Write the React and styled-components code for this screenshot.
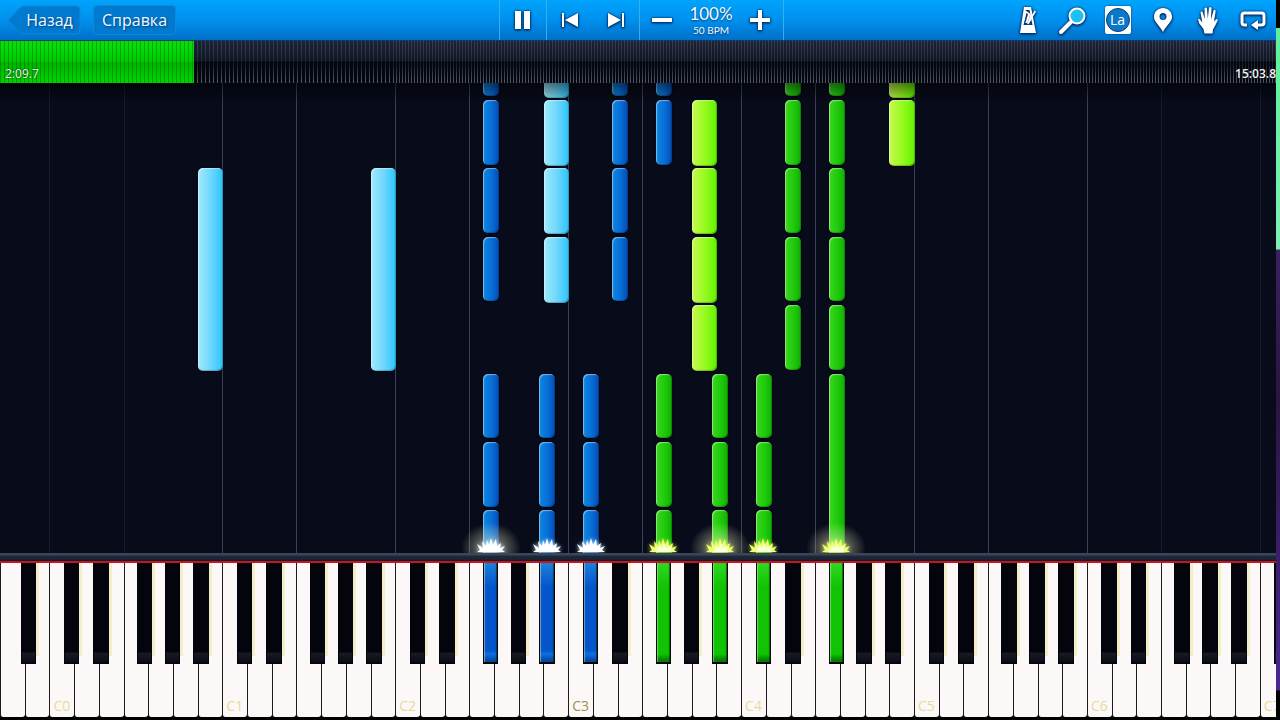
import React from "react";
import styled, { createGlobalStyle, css } from "styled-components";

const GlobalStyle = createGlobalStyle`
  * {
    box-sizing: border-box;
  }
  body {
    margin: 0;
    background: #000;
    font-family: "Open Sans", "Noto Sans", sans-serif;
  }
  button {
    font-family: inherit;
    border: 0;
    padding: 0;
    margin: 0;
    background: none;
    cursor: pointer;
  }
`;

// width of a white key, in % of the keyboard
const KEY = 1.9362;
// height of one beat row, in % of the note field
const ROW = 14.55;
const FIRST_ROW = 3.617;
const WHITE_COUNT = 52;

// where a black key starts, counted in white keys from the C of its octave
const BLACK_AT = { C: 0.587, D: 1.78, F: 3.54, G: 4.67, A: 5.83 };
const NAMES = ["C", "D", "E", "F", "G", "A", "B"];

// the keyboard starts on A, two white keys before C0
const octaveStart = (octave) => 2 + octave * 7;

const pitchLeft = (pitch) => {
  const sharp = pitch[1] === "#";
  const octave = Number(pitch[pitch.length - 1]);
  const inOctave = sharp ? BLACK_AT[pitch[0]] : NAMES.indexOf(pitch[0]);
  return (octaveStart(octave) + inOctave) * KEY;
};

const notes = [
  { pitch: "B0", rows: [1], span: 3, hand: "left" },
  { pitch: "B1", rows: [1], span: 3, hand: "left" },
  { pitch: "F#2", rows: [-1, 0, 1, 2, 4, 5, 6], hand: "left" },
  { pitch: "B2", rows: [-1, 0, 1, 2], hand: "left" },
  { pitch: "A#2", rows: [4, 5, 6], hand: "left" },
  { pitch: "C#3", rows: [4, 5, 6], hand: "left" },
  { pitch: "D#3", rows: [-1, 0, 1, 2], hand: "left" },
  { pitch: "F#3", rows: [-1, 0], hand: "left" },
  { pitch: "F#3", rows: [4, 5, 6], hand: "right" },
  { pitch: "A3", rows: [0, 1, 2, 3], hand: "right" },
  { pitch: "A#3", rows: [4, 5, 6], hand: "right" },
  { pitch: "C#4", rows: [4, 5, 6], hand: "right" },
  { pitch: "D#4", rows: [-1, 0, 1, 2, 3], hand: "right" },
  { pitch: "F#4", rows: [-1, 0, 1, 2, 3], hand: "right" },
  { pitch: "F#4", rows: [4], span: 3, hand: "right" },
  { pitch: "B4", rows: [-1, 0], hand: "right" },
];

const pressed = {
  "F#2": "left",
  "A#2": "left",
  "C#3": "left",
  "F#3": "right",
  "A#3": "right",
  "C#4": "right",
  "F#4": "right",
};

const glowing = ["F#2", "A#3", "F#4"];

const whiteKeys = Array.from({ length: WHITE_COUNT }, (_, i) => {
  const name = NAMES[(i + 5) % 7];
  const octave = Math.floor((i + 5) / 7) - 1;
  return { name, octave };
});

function Spark({ pitch, hand }) {
  const color = hand === "left" ? "#ffffff" : "#f0ff7a";
  return (
    <SparkBox
      $hand={hand}
      $glow={glowing.includes(pitch)}
      style={{ left: `${pitchLeft(pitch) + KEY * 0.315}%` }}
    >
      <svg width="32" height="16" viewBox="0 0 32 16">
        <path
          d="M2 15 L5 13 L2 7 L8 11 L7 4 L11 9 L12 3 L14 8 L16 1 L18 8 L21 2 L22 9 L26 6 L25 11 L30 9 L27 13 L30 15 Z"
          fill={color}
        />
        <path d="M9 15 L12 9 L15 11 L17 6 L19 11 L23 9 L24 15 Z" fill="#ffffff" opacity="0.7" />
      </svg>
    </SparkBox>
  );
}

function NoteField() {
  return (
    <Field>
      {whiteKeys.map((key, i) => {
        if (i === 0 || (key.name !== "C" && key.name !== "F")) return null;
        return (
          <GuideLine
            key={i}
            $faint={i < 6 || i > 44}
            style={{ left: `${i * KEY}%` }}
          />
        );
      })}
      {notes.map((note) =>
        note.rows.map((row) => {
          const sharp = note.pitch[1] === "#";
          return (
            <Note
              key={`${note.pitch}-${row}`}
              $hand={note.hand}
              $sharp={sharp}
              style={{
                left: `${pitchLeft(note.pitch)}%`,
                width: `${KEY * (sharp ? 0.65 : 1.02)}%`,
                top: `${FIRST_ROW + row * ROW}%`,
                height: `${ROW * (note.span || 1) - (sharp ? 0.8 : 0.5)}%`,
              }}
            />
          );
        })
      )}
      <FieldShade />
      {Object.entries(pressed).map(([pitch, hand]) => (
        <Spark key={pitch} pitch={pitch} hand={hand} />
      ))}
    </Field>
  );
}

function Keyboard() {
  return (
    <Keys>
      {whiteKeys.map((key, i) => {
        const sharpName = `${key.name}#${key.octave}`;
        const hasSharp = key.name in BLACK_AT;
        return (
          <KeySlot key={i}>
            <WhiteKey aria-label={`${key.name}${key.octave}`}>
              {key.name === "C" && (
                <KeyLabel $middle={key.octave === 3}>C{key.octave}</KeyLabel>
              )}
            </WhiteKey>
            {hasSharp && (
              <BlackKey
                aria-label={sharpName}
                $hand={pressed[sharpName]}
                style={{ left: `${(BLACK_AT[key.name] - NAMES.indexOf(key.name)) * 100}%` }}
              />
            )}
          </KeySlot>
        );
      })}
    </Keys>
  );
}

function App() {
  return (
    <Screen>
      <GlobalStyle />
      <Player>
        <Toolbar>
          <ToolbarStart>
            <BackButton>
              <svg width="74" height="30" viewBox="0 0 74 30">
                <path
                  d="M1 15 L13 2.5 Q15 1 17 1 H69 Q73 1 73 5 V25 Q73 29 69 29 H17 Q15 29 13 27.5 Z"
                  fill="#007acf"
                  stroke="#1088dc"
                />
              </svg>
              <span>Назад</span>
            </BackButton>
            <HelpButton>Справка</HelpButton>
          </ToolbarStart>
          <Transport>
            <Group $width={47}>
              <IconButton aria-label="Пауза">
                <svg width="20" height="24" viewBox="0 0 20 24">
                  <path d="M2 3h6v18H2zM11 3h6v18h-6z" />
                </svg>
              </IconButton>
            </Group>
            <Group $width={93}>
              <IconButton aria-label="Назад по тактам">
                <svg width="20" height="18" viewBox="0 0 20 18">
                  <path d="M2 2h2v14H2zM18 2v14L5 9z" />
                </svg>
              </IconButton>
              <IconButton aria-label="Вперёд по тактам">
                <svg width="20" height="18" viewBox="0 0 20 18">
                  <path d="M16 2h2v14h-2zM2 2v14L15 9z" />
                </svg>
              </IconButton>
            </Group>
            <Group $width={144}>
              <IconButton aria-label="Медленнее">
                <svg width="24" height="24" viewBox="0 0 24 24">
                  <path d="M2 10h20v4H2z" />
                </svg>
              </IconButton>
              <Tempo>
                <strong>100%</strong>
                <span>50 BPM</span>
              </Tempo>
              <IconButton aria-label="Быстрее">
                <svg width="24" height="24" viewBox="0 0 24 24">
                  <path d="M10 2h4v8h8v4h-8v8h-4v-8H2v-4h8z" />
                </svg>
              </IconButton>
            </Group>
          </Transport>
          <Tools>
            <IconButton aria-label="Метроном">
              <svg width="24" height="30" viewBox="0 0 24 30">
                <path
                  fillRule="evenodd"
                  d="M8 2h7l5 26H4zM9 5h4.500l.9 4-3 9h-2l2.600-9-1.500-1-3 12h9l-1.500-7-1 4h-2l2.600-8z"
                />
                <path d="M18.500 5.500l1.500 1-7.500 13-1.500-1z" />
              </svg>
            </IconButton>
            <IconButton aria-label="Масштаб">
              <svg width="30" height="30" viewBox="0 0 30 30">
                <path d="M13 17L3 27" stroke="#fff" strokeWidth="4" strokeLinecap="round" />
                <circle cx="19" cy="11" r="7.500" fill="#1cc0f4" stroke="#fff" strokeWidth="2" />
              </svg>
            </IconButton>
            <IconButton aria-label="Названия нот">
              <NoteBadge>
                <span>La</span>
              </NoteBadge>
            </IconButton>
            <IconButton aria-label="Закладка">
              <svg width="22" height="28" viewBox="0 0 22 28">
                <path
                  fillRule="evenodd"
                  d="M11 2c-5 0-9 3.800-9 8.700C2 16 7.500 19 11 26c3.500-7 9-10 9-15.300C20 5.800 16 2 11 2zm0 5a3.500 3.500 0 1 1 0 7 3.500 3.500 0 0 1 0-7z"
                />
              </svg>
            </IconButton>
            <IconButton aria-label="Руки">
              <svg width="24" height="30" viewBox="0 0 24 30">
                <path d="M8.500 28.500L7.500 24 3.300 18.500 2 14.300q1-1.300 2 .2l2.300 3L4.500 7.300q1-1.800 2.200 0l2 7L8.500 3.300q1.300-1.800 2.500 0l.8 10.500L13 2.800q1.500-1.500 2.500.2l-.5 11.500 2.500-9q1.500-1.500 2.200.5L18 16.500l2.200-2.300q1.800-.5 1.500 1.200L19.500 20 17 24.500l-.5 4z" />
              </svg>
            </IconButton>
            <IconButton aria-label="Повтор">
              <svg width="30" height="24" viewBox="0 0 30 24">
                <path
                  d="M9 17H6.500Q4 17 4 14.500V7.500Q4 5 6.500 5H23.500Q26 5 26 7.500V14.500Q26 17 23.500 17H18"
                  fill="none"
                  stroke="#fff"
                  strokeWidth="3"
                />
                <path d="M13 17l7-5v10z" />
              </svg>
            </IconButton>
          </Tools>
        </Toolbar>
        <Timeline role="progressbar" aria-valuenow={15} aria-label="Позиция">
          <Played style={{ width: "15.2%" }} />
          <Ticks $step={4} style={{ width: "15.7%" }} />
          <Ticks $step={3} style={{ width: "69.1%" }} />
          <Times>
            <span>2:09.7</span>
            <span>15:03.8</span>
          </Times>
        </Timeline>
        <NoteField />
        <Rail />
        <Keyboard />
      </Player>
      <DesktopEdge />
    </Screen>
  );
}

const Screen = styled.div`
  display: flex;
  min-height: 100vh;
  background: #000;
`;

const Player = styled.main`
  flex: 1;
  min-width: 0;
  display: flex;
  flex-direction: column;
  overflow: hidden;
`;

// a sliver of the desktop behind the window
const DesktopEdge = styled.div`
  width: 4px;
  background: linear-gradient(
    to bottom,
    #000 28px,
    #5cf29a 28px,
    #7df0b4 249px,
    #3a2260 250px,
    #2b1440 400px,
    #4a2890 calc(100% - 30px),
    #000 calc(100% - 29px)
  );
`;

const Toolbar = styled.header`
  height: 41px;
  padding: 0 1px 0 7px;
  display: grid;
  grid-template-columns: 1fr auto 1fr;
  background: linear-gradient(to bottom, #00a4fc, #0090ee 50%, #0070c8);
  border-bottom: 1px solid #0a3c70;
  color: #f4faff;
`;

const ToolbarStart = styled.div`
  display: flex;
  align-items: center;
  gap: 12px;
`;

const buttonText = css`
  font-size: 16px;
  line-height: 30px;
  color: #f4faff;
  text-shadow: 1px 1px 2px #003c78;
`;

const BackButton = styled.button`
  display: grid;
  ${buttonText}

  svg,
  span {
    grid-area: 1 / 1;
  }
  span {
    padding-left: 11px;
  }
`;

const HelpButton = styled.button`
  height: 30px;
  padding: 0 8px;
  background: #007acf;
  border: 1px solid #1088dc;
  border-radius: 4px;
  ${buttonText}
  line-height: 28px;
`;

const Transport = styled.div`
  display: flex;
  border-right: 1px solid #3cacf0;
`;

const Group = styled.div`
  width: ${(props) => props.$width}px;
  display: flex;
  align-items: center;
  border-left: 1px solid #3cacf0;
`;

const IconButton = styled.button`
  flex: 1;
  height: 40px;
  display: flex;
  align-items: center;
  justify-content: center;

  svg {
    fill: #fff;
    overflow: visible;
    filter: drop-shadow(0 0 1px #002a60) drop-shadow(0 1px 1px #002a60);
  }
`;

const Tempo = styled.div`
  width: 52px;
  display: flex;
  flex-direction: column;
  align-items: center;
  font-family: Lato, sans-serif;
  text-shadow: 0 1px 2px #003c78;

  strong {
    font-weight: 400;
    font-size: 17px;
    line-height: 20px;
  }
  span {
    font-size: 10px;
    line-height: 12px;
  }
`;

const Tools = styled.div`
  display: flex;
  justify-content: flex-end;

  ${IconButton} {
    flex: 0 0 45px;
  }
`;

const NoteBadge = styled.span`
  width: 26px;
  height: 28px;
  padding: 1px;
  display: flex;
  align-items: center;
  border-radius: 2px;
  background: #fff;
  box-shadow: 0 0 2px #002a60;

  span {
    width: 24px;
    height: 24px;
    border-radius: 50%;
    background: #0a78c8;
    border: 1px solid #0a3c78;
    color: #fff;
    font-size: 14px;
    line-height: 22px;
    text-align: center;
  }
`;

const Timeline = styled.div`
  position: relative;
  height: 42px;
  display: flex;
  background: #05070f;
`;

const Played = styled.div`
  background: repeating-linear-gradient(to right, rgba(0, 70, 0, 0.35) 0 1px, transparent 1px 4px),
    linear-gradient(to bottom, #08e008, #00cc00 48%, #00b400 52%, #00d400);
`;

const Ticks = styled.div`
  background: linear-gradient(
      to bottom,
      rgba(38, 46, 66, 0.7),
      rgba(18, 25, 42, 0.8) 48%,
      rgba(4, 6, 14, 0.85) 50%,
      rgba(10, 12, 22, 0.25)
    ),
    repeating-linear-gradient(
      to right,
      #05070f 0 ${(props) => props.$step - 1}px,
      #6c7082 ${(props) => props.$step - 1}px ${(props) => props.$step}px
    );
`;

const Times = styled.div`
  position: absolute;
  inset: auto 0 1px 5px;
  display: flex;
  justify-content: space-between;
  font-size: 12px;
  line-height: 16px;
  color: #f4f4f4;
  text-shadow: 0 0 2px #000;

  span:last-child {
    font-weight: 600;
  }
`;

const Field = styled.section`
  position: relative;
  flex: 1;
  min-height: 240px;
  overflow: hidden;
  background: #070b1a;
`;

const FieldShade = styled.div`
  position: absolute;
  inset: 0 0 auto 0;
  height: 18px;
  background: linear-gradient(to bottom, rgba(0, 0, 0, 0.5), rgba(0, 0, 0, 0.2) 70%, transparent);
`;

const GuideLine = styled.i`
  position: absolute;
  top: 0;
  bottom: 0;
  width: 1px;
  background: ${(props) => (props.$faint ? "#151b2e" : "#3c4054")};
`;

const noteFill = {
  left: {
    white: "linear-gradient(to right, #a0e8fc, #70d8fc 50%, #2cc4fa)",
    black: "linear-gradient(to right, #0c88e0, #0870d8 50%, #044cb8)",
  },
  right: {
    white: "linear-gradient(to right, #c8f850, #98fa20 50%, #60f400)",
    black: "linear-gradient(to right, #3cd420, #20cc0c 50%, #10b004)",
  },
};

const Note = styled.div`
  position: absolute;
  border-radius: 5px;
  background: ${(props) => noteFill[props.$hand][props.$sharp ? "black" : "white"]};
  box-shadow: inset 1px 1px 1px rgba(255, 255, 255, 0.45), inset -1px -1px 1px rgba(0, 0, 0, 0.25),
    0 0 2px #000;
`;

const SparkBox = styled.div`
  position: absolute;
  bottom: 0;
  width: 60px;
  height: 32px;
  margin-left: -30px;
  display: flex;
  align-items: flex-end;
  justify-content: center;
  background: ${(props) =>
    props.$glow
      ? "radial-gradient(ellipse 50% 80% at 50% 85%, rgba(255, 250, 200, 0.6), transparent)"
      : "none"};

  svg {
    filter: drop-shadow(0 0 2px ${(props) => (props.$hand === "left" ? "#b8e4ff" : "#d8f040")});
  }
`;

const Rail = styled.div`
  height: 10px;
  background: linear-gradient(to bottom, #3c4656 2px, #1e2838 3px, #1a2232 7px, #10141e 8px, #c81420 8px);
`;

const Keys = styled.div`
  display: flex;
  height: 157px;
  padding-bottom: 3px;
  overflow: hidden;
  background: #000;
`;

const KeySlot = styled.div`
  position: relative;
  flex: 0 0 ${KEY}%;
  display: flex;
`;

const WhiteKey = styled.button`
  flex: 1;
  min-width: 0;
  display: flex;
  align-items: flex-end;
  background: #fcf8f8;
  border-left: 1px solid #1c1c1c;
  border-radius: 0 0 3px 3px;
`;

const KeyLabel = styled.span`
  padding: 0 0 2px 3px;
  font-size: 14px;
  line-height: 18px;
  color: ${(props) => (props.$middle ? "#a09048" : "#e6dc98")};
`;

const keyFill = {
  left: "linear-gradient(to bottom, #1c80dc, #0454cc 24px, #0454cc 88%, #0c70dc 92%, #043c98)",
  right: "linear-gradient(to bottom, #30d820, #10c404 24px, #10c404 92%, #089400 96%, #067000)",
};

const BlackKey = styled.button`
  position: absolute;
  z-index: 1;
  top: 0;
  width: 63%;
  height: 101px;
  border: solid #05060c;
  border-width: 0 1px 2px;
  background: linear-gradient(to bottom, #04050c, #04050c 90%, #181a24 91%, #0c0d16);
  box-shadow: 3px -8px 0 #f2eec8;

  ${(props) =>
    props.$hand &&
    css`
      background: ${keyFill[props.$hand]};
      box-shadow: inset 1px 0 1px rgba(200, 240, 200, 0.5), inset -1px 0 1px rgba(0, 40, 0, 0.6);
    `}
`;

export default App;
